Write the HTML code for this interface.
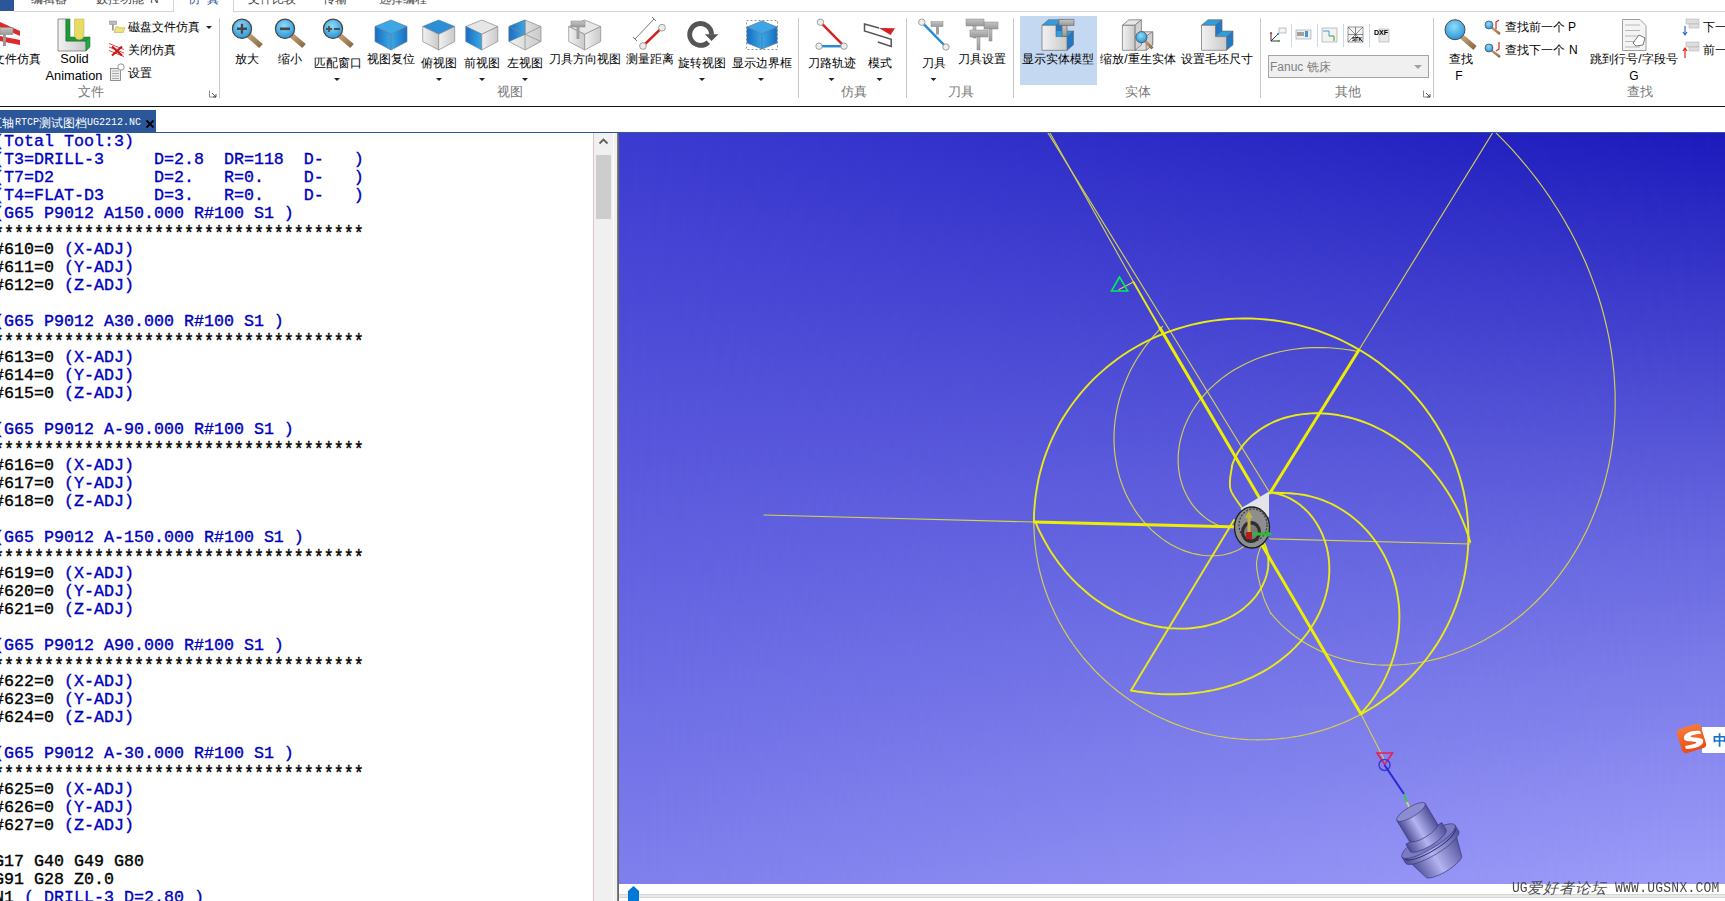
<!DOCTYPE html>
<html><head><meta charset="utf-8">
<style>
*{margin:0;padding:0;box-sizing:border-box}
html,body{width:1725px;height:901px;overflow:hidden;background:#fff;position:relative;font-family:"Liberation Sans",sans-serif;color:#000}
.a{position:absolute}
.t12{font-size:12px;line-height:14px;white-space:nowrap}
#code{position:absolute;left:-6px;top:133px;font-family:"Liberation Mono",monospace;font-weight:normal;-webkit-text-stroke:0.35px currentColor;font-size:16.667px;line-height:18px;white-space:pre;color:#000}
#code .c{color:#0000c0}
#code .st{display:inline-block;transform:translateY(3px) scale(1.0,1.2);transform-origin:0 50%}
#vp{position:absolute;left:619px;top:133px;width:1106px;height:751px;background:linear-gradient(to bottom,rgb(60,59,209),rgb(127,127,237));overflow:hidden}
#vp .r{position:absolute;left:0;top:0;width:100%;height:100%;background:linear-gradient(to bottom,rgb(28,26,187) 0%,rgb(96,96,220) 48%,rgb(157,157,249) 100%);-webkit-mask-image:linear-gradient(to right,transparent,#000);mask-image:linear-gradient(to right,transparent,#000)}
</style></head><body>

<!-- top tab row -->
<div class="a" style="left:0;top:0;width:14px;height:11px;background:#2b579a"></div>
<div class="a" style="left:14px;top:11px;width:160px;height:1px;background:#d5d5d5"></div>
<div class="a" style="left:233px;top:11px;width:1492px;height:1px;background:#d5d5d5"></div>
<div class="a" style="left:173px;top:0;width:1px;height:12px;background:#d5d5d5"></div>
<div class="a" style="left:233px;top:0;width:1px;height:12px;background:#d5d5d5"></div>

<!-- tab labels -->
<div class="a t12" style="left:31px;top:-8px;color:#444">编辑器</div>
<div class="a t12" style="left:96px;top:-8px;color:#444">数控功能</div>
<div class="a t12" style="left:150px;top:-8px;color:#444">N</div>
<div class="a t12" style="left:188px;top:-8px;color:#2b579a">仿&nbsp;&nbsp;真</div>
<div class="a t12" style="left:248px;top:-8px;color:#444">文件比较</div>
<div class="a t12" style="left:323px;top:-8px;color:#444">传输</div>
<div class="a t12" style="left:379px;top:-8px;color:#444">选择编程</div>

<!-- ribbon icons -->
<svg class="a" style="left:0;top:0" width="1725" height="106" viewBox="0 0 1725 106">
<defs>
<linearGradient id="gB" x1="0" y1="0" x2="1" y2="0"><stop offset="0" stop-color="#1a6cbf"/><stop offset="1" stop-color="#3aa8e6"/></linearGradient>
<linearGradient id="gB2" x1="0" y1="0" x2="1" y2="0"><stop offset="0" stop-color="#3aa8e6"/><stop offset="1" stop-color="#1a6cbf"/></linearGradient>
<linearGradient id="gG" x1="0" y1="0" x2="1" y2="0"><stop offset="0" stop-color="#f2f2f2"/><stop offset="1" stop-color="#c9c9c9"/></linearGradient>
<linearGradient id="gG2" x1="0" y1="0" x2="0" y2="1"><stop offset="0" stop-color="#c4c4c4"/><stop offset="1" stop-color="#9a9a9a"/></linearGradient>
<radialGradient id="gL" cx="0.45" cy="0.35" r="0.65"><stop offset="0" stop-color="#8fdcfa"/><stop offset="1" stop-color="#2a96d6"/></radialGradient>
<linearGradient id="gH" x1="0" y1="0" x2="1" y2="1"><stop offset="0" stop-color="#c9a77c"/><stop offset="1" stop-color="#8c6a45"/></linearGradient>
</defs>
<g stroke="#c8c8c8" stroke-width="1">
<line x1="219.5" y1="18" x2="219.5" y2="98"/>
<line x1="798.5" y1="18" x2="798.5" y2="98"/>
<line x1="906.5" y1="18" x2="906.5" y2="98"/>
<line x1="1013.5" y1="18" x2="1013.5" y2="98"/>
<line x1="1260.5" y1="18" x2="1260.5" y2="98"/>
<line x1="1433.5" y1="18" x2="1433.5" y2="98"/>
</g>
<!-- file sim icon (cut) -->
<g>
<polygon points="0,22 20,31 20,36 0,27" fill="#e02a2a"/>
<polygon points="0,36 20,40 20,45 0,41" fill="#e02a2a"/>
<rect x="0" y="27.5" width="13" height="7" fill="url(#gG2)" stroke="#888" stroke-width="0.6"/>
<rect x="3" y="34" width="3" height="12" fill="#9a9a9a"/>
</g>
<!-- solid animation -->
<g>
<polygon points="58,19 66,19 66,41 86,41 86,51 58,51" fill="url(#gG)" stroke="#777" stroke-width="0.8"/>
<polygon points="66,19 70,19 70,37 90,37 86,41 66,41" fill="#1f9a3a" stroke="#136b25" stroke-width="0.5"/>
<polygon points="86,41 90,37 90,47 86,51" fill="#2aa54a" stroke="#136b25" stroke-width="0.5"/>
<path d="M74.5,19 H84 V35 A4.75,4.75 0 0 1 74.5,35 Z" fill="#e6dc64" stroke="#b8ac40" stroke-width="0.5"/>
</g>
<!-- small file icons -->
<g>
<rect x="109.5" y="21" width="7" height="3.5" fill="#bbb" stroke="#888" stroke-width="0.5"/>
<rect x="112" y="24.5" width="1.8" height="6" fill="#9a9a9a"/>
<polygon points="114.2,32.5 115.8,26.8 118.5,26.8 119.5,27.8 125,27.8 123.2,32.5" fill="#efe27a" stroke="#b8a844" stroke-width="0.6"/>
<path d="M109,43.5 L124,49.5 M109,47 L124,53 M109,50.5 L124,56.5" stroke="#e04848" stroke-width="1" fill="none"/>
<polygon points="114,49 117,47 120,50 117,53" fill="#bfe8ea"/>
<path d="M112,46.5 L122,55.5 M122,46.5 L112,55.5" stroke="#c81414" stroke-width="2"/>
<rect x="110.5" y="68.5" width="10" height="12" fill="#eee" stroke="#777" stroke-width="0.8"/>
<path d="M112,71 h7 M112,73.5 h7 M112,76 h7 M112,78.5 h7" stroke="#999" stroke-width="0.8"/>
<circle cx="121" cy="67" r="3.2" fill="#fff" stroke="#777" stroke-width="0.8"/>
<polygon points="206,26 212,26 209,29" fill="#222"/>
<path d="M209.5,90.5 v6.5 h6.5" stroke="#888" fill="none"/><path d="M212,93 l4,4 M216,94 v3 h-3" stroke="#444" fill="none" stroke-width="0.9"/>
</g>
<!-- magnifiers -->
<g id="mag">
<line x1="247" y1="34" x2="261" y2="46" stroke="url(#gH)" stroke-width="5.5"/>
<circle cx="242" cy="28.8" r="9.6" fill="url(#gL)" stroke="#4a4444" stroke-width="1.2"/>
<path d="M237,28.8 h10 M242,23.8 v10" stroke="#4a4444" stroke-width="2.4"/>
</g>
<g>
<line x1="290" y1="34" x2="304" y2="46" stroke="url(#gH)" stroke-width="5.5"/>
<circle cx="285" cy="28.8" r="9.6" fill="url(#gL)" stroke="#4a4444" stroke-width="1.2"/>
<path d="M280,28.8 h10" stroke="#4a4444" stroke-width="2.6"/>
</g>
<g>
<line x1="338" y1="34" x2="352" y2="46" stroke="url(#gH)" stroke-width="5.5"/>
<circle cx="333" cy="28.8" r="9.6" fill="url(#gL)" stroke="#4a4444" stroke-width="1.2"/>
<path d="M326,29 h6 M329,26 v6 M334,29 h6" stroke="#4f4f4f" stroke-width="1.8"/>
</g>
<polygon points="334,78 340,78 337,81" fill="#222"/>
<!-- cubes -->
<g stroke="#5a7ea8" stroke-width="0.7" stroke-linejoin="round">
<polygon points="391,20 407,26.5 391,34.3 375,26.5" fill="#3ea6e4"/>
<polygon points="375,26.5 391,34.3 391,50 375,41.5" fill="url(#gB)"/>
<polygon points="391,34.3 407,26.5 407,41.5 391,50" fill="url(#gB2)"/>
</g>
<g stroke="#8a8a8a" stroke-width="0.7" stroke-linejoin="round">
<polygon points="438.7,20 454.7,26.5 438.7,34.3 422.7,26.5" fill="#2b8fd6" stroke="#4a7eb0"/>
<polygon points="422.7,26.5 438.7,34.3 438.7,50 422.7,41.5" fill="url(#gG)"/>
<polygon points="438.7,34.3 454.7,26.5 454.7,41.5 438.7,50" fill="url(#gG)"/>
<polygon points="481.8,20 497.8,26.5 481.8,34.3 465.8,26.5" fill="#e6e6e6"/>
<polygon points="465.8,26.5 481.8,34.3 481.8,50 465.8,41.5" fill="url(#gB)" stroke="#4a7eb0"/>
<polygon points="481.8,34.3 497.8,26.5 497.8,41.5 481.8,50" fill="url(#gG)"/>
<polygon points="525,20 541,26.5 541,41.5 525,50 509,41.5 509,26.5" fill="url(#gG)"/>
<polygon points="525,20 525,34.3 509,41.5 509,26.5" fill="url(#gB)" stroke="#4a7eb0"/>
<path d="M525,34.3 L541,26.5 M525,34.3 L541,41.5 M525,34.3 V50 M525,34.3 L509,26.5 M525,20 V34.3" fill="none"/>
<polygon points="584.7,20 600.7,26.5 584.7,34.3 568.7,26.5" fill="#e8e8e8"/>
<polygon points="568.7,26.5 584.7,34.3 584.7,50 568.7,41.5" fill="url(#gG)"/>
<polygon points="584.7,34.3 600.7,26.5 600.7,41.5 584.7,50" fill="url(#gG)"/>
</g>
<g><rect x="571" y="21" width="14" height="6" fill="url(#gG2)" stroke="#888" stroke-width="0.5"/><rect x="576.5" y="27" width="3" height="12" fill="#a0a0a0"/></g>
<polygon points="436,78 442,78 439,81" fill="#222"/>
<polygon points="479,78 485,78 482,81" fill="#222"/>
<polygon points="522,78 528,78 525,81" fill="#222"/>
<!-- measure -->
<g>
<path d="M635,39 L654,19 M633,37 l4,4 M652,17 l4,4" stroke="#555" stroke-width="0.8" fill="none"/>
<line x1="643" y1="46" x2="662" y2="27.7" stroke="#d62020" stroke-width="2.5"/>
<circle cx="643" cy="46" r="3.4" fill="#ececec" stroke="#8a8a8a" stroke-width="0.8"/>
<circle cx="662" cy="27.7" r="3.4" fill="#ececec" stroke="#8a8a8a" stroke-width="0.8"/>
</g>
<!-- rotate -->
<g>
<path d="M708.3,42.2 A10.9,10.9 0 1 1 711.5,34.6" stroke="#555" stroke-width="4.9" fill="none"/>
<polygon points="704.9,34.3 718.4,34.3 711.5,41" fill="#555"/>
</g>
<polygon points="699,78 705,78 702,81" fill="#222"/>
<!-- bbox cube -->
<rect x="746.5" y="20.5" width="31" height="29" fill="none" stroke="#777" stroke-width="0.8" stroke-dasharray="2,2"/>
<g stroke="#4a7eb0" stroke-width="0.7" stroke-linejoin="round">
<polygon points="762,21 777,27 762,34 747,27" fill="#3ea6e4"/>
<polygon points="747,27 762,34 762,49 747,43" fill="url(#gB)"/>
<polygon points="762,34 777,27 777,43 762,49" fill="url(#gB2)"/>
</g>
<polygon points="758,78 764,78 761,81" fill="#222"/>
<!-- toolpath -->
<g>
<line x1="820.4" y1="22.2" x2="844" y2="46.2" stroke="#d42424" stroke-width="2.5"/>
<line x1="819" y1="46.2" x2="844" y2="46.2" stroke="#2a8ad0" stroke-width="2.5"/>
<circle cx="820.4" cy="22.2" r="3.2" fill="#eee" stroke="#8a8a8a" stroke-width="0.8"/>
<circle cx="844" cy="46.2" r="3.2" fill="#eee" stroke="#8a8a8a" stroke-width="0.8"/>
<circle cx="819" cy="46.2" r="3.2" fill="#eee" stroke="#8a8a8a" stroke-width="0.8"/>
</g>
<polygon points="828.5,78 834.5,78 831.5,81" fill="#222"/>
<!-- mode -->
<g>
<polyline points="879,28 864.5,24 864.5,31 891.2,39.4 891.2,46.4 877.8,42" stroke="#555" stroke-width="1.5" fill="none"/>
<polygon points="879,28 895,28.3 890.6,35" fill="#d62020"/>
</g>
<polygon points="876.5,78 882.5,78 879.5,81" fill="#222"/>
<!-- tool -->
<g>
<rect x="931" y="21.6" width="12" height="5" fill="url(#gG2)" stroke="#888" stroke-width="0.5"/>
<rect x="936" y="26.6" width="3" height="8" fill="#a0a0a0"/>
<line x1="921.8" y1="22.2" x2="946" y2="47" stroke="#2a8ad0" stroke-width="2.5"/>
<circle cx="921.8" cy="22.2" r="3.2" fill="#eee" stroke="#8a8a8a" stroke-width="0.8"/>
<circle cx="946" cy="47" r="3.2" fill="#eee" stroke="#8a8a8a" stroke-width="0.8"/>
</g>
<polygon points="930.5,78 936.5,78 933.5,81" fill="#222"/>
<!-- tool setting -->
<g fill="url(#gG2)" stroke="#888" stroke-width="0.5">
<rect x="984" y="22" width="14" height="7"/><rect x="989" y="29" width="3" height="12"/>
<rect x="966" y="19" width="18" height="7"/><rect x="973" y="26" width="3" height="12"/>
<rect x="970" y="30" width="18" height="7"/><rect x="977" y="37" width="3" height="13"/>
</g>
<!-- highlight -->
<rect x="1020" y="16" width="77" height="69" fill="#c5d8f2"/>
<!-- solid icons -->
<g stroke="#6a6a6a" stroke-width="0.7" stroke-linejoin="round"><polygon points="1042.0,25.3 1048.5,19.8 1062.5,19.8 1056.0,25.3" fill="#2f9ee0"/><polygon points="1056.0,25.3 1062.5,19.8 1062.5,31.1 1056.0,36.6" fill="#1f78c8"/><polygon points="1056.0,36.6 1062.5,31.1 1073.5,31.1 1067.0,36.6" fill="#2f9ee0"/><polygon points="1067.0,36.6 1073.5,31.1 1073.5,44.8 1067.0,50.3" fill="#1f78c8"/><polygon points="1042.0,25.3 1056.0,25.3 1056.0,36.6 1067.0,36.6 1067.0,50.3 1042.0,50.3" fill="url(#gG)"/><rect x="1056.5" y="31" width="5" height="6" fill="#2f9ee0" stroke="none"/><rect x="1062.0" y="25.3" width="5" height="11" fill="url(#gG2)"/><rect x="1059.0" y="19.4" width="15" height="6" fill="url(#gG2)"/></g>
<g stroke="#6a6a6a" stroke-width="0.7" stroke-linejoin="round"><polygon points="1135,36 1141.5,31.8 1152.7,31.8 1152.7,45 1146.2,50.3 1135,50.3" fill="#e0e0e0"/><polygon points="1146.2,36 1152.7,31.8 1152.7,45 1146.2,50.3" fill="#cfcfcf"/><polygon points="1122.4,25.3 1128.9,19.8 1141.4,19.8 1134.9,25.3" fill="#e6e6e6"/><polygon points="1134.9,25.3 1141.4,19.8 1141.4,45 1134.9,50.3" fill="#d2d2d2"/><rect x="1122.4" y="25.3" width="12.5" height="25" fill="url(#gG)"/><line x1="1144" y1="40" x2="1152.5" y2="48.5" stroke="url(#gH)" stroke-width="3"/><circle cx="1141.4" cy="37.2" r="5.6" fill="url(#gL)" stroke="#4a4a4a" stroke-width="0.8"/></g>
<g stroke="#6a6a6a" stroke-width="0.7" stroke-linejoin="round"><polygon points="1201.5,25.3 1208.0,19.8 1222.0,19.8 1215.5,25.3" fill="#2f9ee0"/><polygon points="1215.5,25.3 1222.0,19.8 1222.0,31.1 1215.5,36.6" fill="#1f78c8"/><polygon points="1215.5,36.6 1222.0,31.1 1233.0,31.1 1226.5,36.6" fill="#2f9ee0"/><polygon points="1226.5,36.6 1233.0,31.1 1233.0,44.8 1226.5,50.3" fill="#1f78c8"/><polygon points="1201.5,25.3 1215.5,25.3 1215.5,36.6 1226.5,36.6 1226.5,50.3 1201.5,50.3" fill="url(#gG)"/></g>
<!-- other small icons -->
<g stroke="#c9d9ec" stroke-width="1"><line x1="1291.5" y1="24" x2="1291.5" y2="47"/><line x1="1317.5" y1="24" x2="1317.5" y2="47"/><line x1="1343.5" y1="24" x2="1343.5" y2="47"/><line x1="1369.5" y1="24" x2="1369.5" y2="47"/></g>
<g>
<path d="M1271,41 L1278,34 M1271,41 H1279 M1271,41 V33" stroke="#333" stroke-width="1" fill="none"/>
<circle cx="1271" cy="33" r="1" fill="#d22"/><circle cx="1278" cy="34" r="1" fill="#27c"/><circle cx="1279" cy="41" r="1" fill="#2a2"/>
<rect x="1279" y="28" width="7" height="5" fill="#f4f4f4" stroke="#999" stroke-width="0.6"/>
<rect x="1296" y="30" width="15" height="9" fill="#eee" stroke="#999" stroke-width="0.6"/><rect x="1305" y="31" width="3" height="6" fill="#3a9ad8"/><path d="M1297,33 h7 M1297,35 h7" stroke="#555" stroke-width="1"/>
<rect x="1322" y="28" width="15" height="14" fill="#f2f2f2" stroke="#999" stroke-width="0.6"/><path d="M1323,31 h6 v5 h5 v5" stroke="#3aa0e0" stroke-width="1" fill="none"/><path d="M1329,36 h5 v5" stroke="#8ac43a" stroke-width="1" fill="none"/>
<rect x="1348" y="27" width="15" height="15" fill="#f4f4f4" stroke="#555" stroke-width="0.6"/><path d="M1348,27 l15,15 M1363,27 l-15,15 M1355.5,27 v15 M1348,34.5 h15" stroke="#444" stroke-width="0.6"/><text x="1352" y="41" font-size="5" font-weight="bold" font-family="Liberation Sans">STK</text>
<rect x="1379" y="29" width="10" height="13" fill="#e8e8e8" stroke="#aaa" stroke-width="0.6"/><text x="1374" y="35" font-size="7" font-weight="bold" font-family="Liberation Sans">DXF</text>
</g>
<rect x="1268.5" y="55.5" width="160" height="22" fill="#f0f0f0" stroke="#a5a5a5"/>
<polygon points="1414,65 1422,65 1418,69" fill="#a0a0a0"/>
<path d="M1423.5,90.5 v6.5 h6.5" stroke="#888" fill="none"/><path d="M1426,93 l4,4 M1430,94 v3 h-3" stroke="#444" fill="none" stroke-width="0.9"/>
<!-- find -->
<g>
<line x1="1461" y1="36" x2="1475" y2="48" stroke="url(#gH)" stroke-width="5"/>
<circle cx="1455" cy="29.7" r="10" fill="url(#gL)" stroke="#4a4a4a" stroke-width="1"/>
</g>
<g>
<line x1="1491" y1="27" x2="1500" y2="34" stroke="url(#gH)" stroke-width="2.5"/>
<circle cx="1489" cy="25" r="4" fill="url(#gL)" stroke="#4a4a4a" stroke-width="0.7"/>
<path d="M1496,29 v-7 l3,-2" stroke="#d22" stroke-width="1.2" fill="none"/>
<line x1="1491" y1="50" x2="1500" y2="57" stroke="url(#gH)" stroke-width="2.5"/>
<circle cx="1489" cy="48" r="4" fill="url(#gL)" stroke="#4a4a4a" stroke-width="0.7"/>
<path d="M1499,42 v7 l-3,2" stroke="#d22" stroke-width="1.2" fill="none"/>
</g>
<g>
<path d="M1622.5,19.5 H1640 L1646,25.5 V50.5 H1622.5 Z" fill="#f4f4f4" stroke="#888" stroke-width="0.8"/>
<path d="M1625,25 h15 M1625,30.5 h15 M1625,36 h15 M1625,41.5 h15 M1625,47 h15" stroke="#aaa" stroke-width="0.8"/>
<path d="M1633,43 l6,-8 l6,3 l-2,7 l-7,1 z" fill="#fff" stroke="#555" stroke-width="0.8"/>
</g>
<g>
<rect x="1686" y="19" width="13" height="5" fill="#ddd" stroke="#aaa" stroke-width="0.5"/><rect x="1689" y="24" width="10" height="4" fill="#ddd" stroke="#aaa" stroke-width="0.5"/>
<path d="M1685,26 v8 M1683,32 l2,3 l2,-3" stroke="#2a70c8" stroke-width="1.2" fill="none"/>
<rect x="1686" y="42" width="13" height="5" fill="#ddd" stroke="#aaa" stroke-width="0.5"/><rect x="1689" y="47" width="10" height="4" fill="#ddd" stroke="#aaa" stroke-width="0.5"/>
<path d="M1685,58 v-9 M1683,51 l2,-3 l2,3" stroke="#d22" stroke-width="1.2" fill="none"/>
</g>
</svg>

<!-- ribbon labels -->
<div class="a t12" style="left:-7px;top:52px;width:42px;text-align:right">文件仿真</div>
<div class="a t12" style="left:24.5px;top:52px;width:100px;text-align:center;font-size:12.8px">Solid</div>
<div class="a t12" style="left:24px;top:69px;width:100px;text-align:center;font-size:12.8px">Animation</div>
<div class="a t12" style="left:128px;top:20px">磁盘文件仿真</div>
<div class="a t12" style="left:128px;top:43px">关闭仿真</div>
<div class="a t12" style="left:128px;top:66px">设置</div>
<div class="a t12" style="left:41px;top:84px;width:100px;text-align:center;color:#777;font-size:13px;line-height:16px">文件</div>

<div class="a t12" style="left:197px;top:52px;width:100px;text-align:center">放大</div>
<div class="a t12" style="left:240px;top:52px;width:100px;text-align:center">缩小</div>
<div class="a t12" style="left:288px;top:56px;width:100px;text-align:center">匹配窗口</div>
<div class="a t12" style="left:341px;top:52px;width:100px;text-align:center">视图复位</div>
<div class="a t12" style="left:389px;top:56px;width:100px;text-align:center">俯视图</div>
<div class="a t12" style="left:432px;top:56px;width:100px;text-align:center">前视图</div>
<div class="a t12" style="left:475px;top:56px;width:100px;text-align:center">左视图</div>
<div class="a t12" style="left:535px;top:52px;width:100px;text-align:center">刀具方向视图</div>
<div class="a t12" style="left:600px;top:52px;width:100px;text-align:center">测量距离</div>
<div class="a t12" style="left:652px;top:56px;width:100px;text-align:center">旋转视图</div>
<div class="a t12" style="left:712px;top:56px;width:100px;text-align:center">显示边界框</div>
<div class="a t12" style="left:460px;top:84px;width:100px;text-align:center;color:#777;font-size:13px;line-height:16px">视图</div>

<div class="a t12" style="left:782px;top:56px;width:100px;text-align:center">刀路轨迹</div>
<div class="a t12" style="left:830px;top:56px;width:100px;text-align:center">模式</div>
<div class="a t12" style="left:884px;top:56px;width:100px;text-align:center">刀具</div>
<div class="a t12" style="left:932px;top:52px;width:100px;text-align:center">刀具设置</div>
<div class="a t12" style="left:804px;top:84px;width:100px;text-align:center;color:#777;font-size:13px;line-height:16px">仿真</div>
<div class="a t12" style="left:911px;top:84px;width:100px;text-align:center;color:#777;font-size:13px;line-height:16px">刀具</div>

<div class="a t12" style="left:1008px;top:52px;width:100px;text-align:center">显示实体模型</div>
<div class="a t12" style="left:1088px;top:52px;width:100px;text-align:center">缩放/重生实体</div>
<div class="a t12" style="left:1167px;top:52px;width:100px;text-align:center">设置毛坯尺寸</div>
<div class="a t12" style="left:1088px;top:84px;width:100px;text-align:center;color:#777;font-size:13px;line-height:16px">实体</div>

<div class="a t12" style="left:1270px;top:60px;color:#808080">Fanuc</div>
<div class="a t12" style="left:1307px;top:60px;color:#808080">铣床</div>
<div class="a t12" style="left:1298px;top:84px;width:100px;text-align:center;color:#777;font-size:13px;line-height:16px">其他</div>

<div class="a t12" style="left:1411px;top:52px;width:100px;text-align:center">查找</div>
<div class="a t12" style="left:1409px;top:69px;width:100px;text-align:center">F</div>
<div class="a t12" style="left:1505px;top:20px">查找前一个</div>
<div class="a t12" style="left:1568px;top:20px">P</div>
<div class="a t12" style="left:1505px;top:43px">查找下一个</div>
<div class="a t12" style="left:1569px;top:43px">N</div>
<div class="a t12" style="left:1584px;top:52px;width:100px;text-align:center">跳到行号/字段号</div>
<div class="a t12" style="left:1584px;top:69px;width:100px;text-align:center">G</div>
<div class="a t12" style="left:1590px;top:84px;width:100px;text-align:center;color:#777;font-size:13px;line-height:16px">查找</div>
<div class="a t12" style="left:1703px;top:20px">下一</div>
<div class="a t12" style="left:1703px;top:43px">前一</div>

<!-- ribbon separator line -->
<div class="a" style="left:0;top:106px;width:1725px;height:1px;background:#111"></div>

<!-- doc tab -->
<div class="a" style="left:0;top:110px;width:156px;height:22px;background:#2b579a"></div>
<div class="a" style="left:0;top:132px;width:1725px;height:1px;background:#2b579a"></div>
<div class="a" style="left:-10px;top:116px;font-size:12px;line-height:14px;color:#fff;white-space:nowrap">五轴</div>
<div class="a" style="left:15px;top:116px;font-family:'Liberation Mono',monospace;font-size:10px;line-height:14px;color:#fff;white-space:nowrap">RTCP</div>
<div class="a" style="left:39px;top:116px;font-size:12px;line-height:14px;color:#fff;white-space:nowrap">测试图档</div>
<div class="a" style="left:87px;top:116px;font-family:'Liberation Mono',monospace;font-size:10px;line-height:14px;color:#fff;white-space:nowrap">UG2212.NC</div>
<svg class="a" style="left:145px;top:119px" width="10" height="10"><path d="M1.5,1.5 L8.5,8.5 M8.5,1.5 L1.5,8.5" stroke="#000" stroke-width="1.8"/></svg>

<!-- code -->
<div id="code"><span class="c">(Total Tool:3)
(T3=DRILL-3     D=2.8  DR=118  D-   )
(T7=D2          D=2.   R=0.    D-   )
(T4=FLAT-D3     D=3.   R=0.    D-   )
(G65 P9012 A150.000 R#100 S1 )</span>
<span class="st">*************************************</span>
#610=0 <span class="c">(X-ADJ)</span>
#611=0 <span class="c">(Y-ADJ)</span>
#612=0 <span class="c">(Z-ADJ)</span>

<span class="c">(G65 P9012 A30.000 R#100 S1 )</span>
<span class="st">*************************************</span>
#613=0 <span class="c">(X-ADJ)</span>
#614=0 <span class="c">(Y-ADJ)</span>
#615=0 <span class="c">(Z-ADJ)</span>

<span class="c">(G65 P9012 A-90.000 R#100 S1 )</span>
<span class="st">*************************************</span>
#616=0 <span class="c">(X-ADJ)</span>
#617=0 <span class="c">(Y-ADJ)</span>
#618=0 <span class="c">(Z-ADJ)</span>

<span class="c">(G65 P9012 A-150.000 R#100 S1 )</span>
<span class="st">*************************************</span>
#619=0 <span class="c">(X-ADJ)</span>
#620=0 <span class="c">(Y-ADJ)</span>
#621=0 <span class="c">(Z-ADJ)</span>

<span class="c">(G65 P9012 A90.000 R#100 S1 )</span>
<span class="st">*************************************</span>
#622=0 <span class="c">(X-ADJ)</span>
#623=0 <span class="c">(Y-ADJ)</span>
#624=0 <span class="c">(Z-ADJ)</span>

<span class="c">(G65 P9012 A-30.000 R#100 S1 )</span>
<span class="st">*************************************</span>
#625=0 <span class="c">(X-ADJ)</span>
#626=0 <span class="c">(Y-ADJ)</span>
#627=0 <span class="c">(Z-ADJ)</span>

G17 G40 G49 G80
G91 G28 Z0.0
N1 <span class="c">( DRILL-3 D=2.80 )</span></div>

<!-- scrollbar -->
<div class="a" style="left:593px;top:133px;width:1px;height:768px;background:#dcc4c4"></div>
<div class="a" style="left:594px;top:133px;width:19px;height:768px;background:#f0f0f0"></div>
<div class="a" style="left:596px;top:155px;width:15px;height:64px;background:#cdcdcd"></div>
<svg class="a" style="left:597px;top:136px" width="13" height="10"><path d="M2.5,7.5 L6.5,3.5 L10.5,7.5" stroke="#606060" stroke-width="1.8" fill="none"/></svg>
<div class="a" style="left:614px;top:133px;width:4px;height:768px;background:#f0f0f0"></div>
<div class="a" style="left:617px;top:133px;width:2px;height:768px;background:linear-gradient(to right,#8a8a8a,#5a5a5a)"></div>

<!-- viewport -->
<div id="vp"><div class="r"></div></div>
<!-- VP-SVG-START -->
<svg class="a" style="left:619px;top:133px" width="1106" height="751" viewBox="0 0 1106 751">
<g fill="none" stroke-linecap="round" stroke-linejoin="round">
<path d="M414.9,389.0 L414.9,392.7 L415.0,396.4 L415.2,400.1 L415.4,403.8 L415.7,407.4 L416.1,411.1 L416.5,414.8 L417.0,418.5 L417.5,422.2 L418.2,425.8 L418.8,429.5 L419.6,433.1 L420.4,436.7 L421.3,440.3 L422.3,444.0 L423.3,447.5 L424.3,451.1 L425.5,454.7 L426.7,458.2 L428.0,461.7 L429.3,465.2 L430.7,468.7 L432.1,472.2 L433.7,475.6 L435.2,479.0 L436.9,482.4 L438.6,485.7 L440.3,489.1 L442.2,492.4 L444.0,495.6 L446.0,498.9 L448.0,502.1 L450.0,505.3 L452.1,508.4 L454.3,511.5 L456.5,514.6 L458.8,517.6 L461.1,520.6 L463.4,523.6 L465.9,526.5 L468.3,529.4 L470.9,532.2 L473.4,535.0 L476.1,537.8 L478.7,540.5 L481.5,543.1 L484.2,545.8 L487.0,548.3 L489.9,550.9 L492.8,553.4 L495.7,555.8 L498.7,558.2 L501.8,560.5 L504.8,562.8 L507.9,565.0 L511.1,567.2 L514.2,569.3 L517.5,571.4 L520.7,573.4 L524.0,575.4 L527.3,577.3 L530.7,579.2 L534.0,581.0 L537.5,582.7 L540.9,584.4 L544.4,586.0 L547.9,587.6 L551.4,589.1 L554.9,590.6 L558.5,591.9 L562.1,593.3 L565.7,594.5 L569.4,595.8 L573.0,596.9 L576.7,598.0 L580.4,599.0 L584.1,600.0 L587.8,600.9 L591.5,601.7 L595.3,602.5 L599.0,603.2 L602.8,603.8 L606.6,604.4 L610.4,605.0 L614.2,605.4 L618.0,605.8 L621.8,606.1 L625.6,606.4 L629.4,606.6 L633.2,606.7 L637.0,606.8 L640.8,606.8 L644.6,606.7 L648.4,606.6 L652.2,606.4 L656.0,606.2 L659.8,605.8 L663.5,605.4 L667.3,605.0 L671.0,604.5 L674.8,603.9 L678.5,603.3 L682.2,602.6 L685.9,601.8 L689.6,601.0 L693.3,600.1 L696.9,599.1 L700.5,598.1 L704.1,597.0 L707.7,595.9 L711.3,594.7 L714.8,593.4 L718.3,592.1 L721.8,590.7 L725.3,589.2 L728.7,587.7 L732.1,586.2 L735.4,584.6 L738.8,582.9 L742.1,581.1" stroke="#d4d04c" stroke-width="1.15"/>
<path d="M739.0,218.5 L733.1,217.4 L727.3,216.5 L721.5,215.7 L715.7,215.2 L710.0,214.8 L704.3,214.6 L698.7,214.5 L693.1,214.6 L687.6,214.9 L682.1,215.4 L676.7,216.0 L671.4,216.8 L666.1,217.7 L661.0,218.8 L655.9,220.0 L650.9,221.4 L646.0,222.9 L641.2,224.5 L636.6,226.3 L632.0,228.2 L627.6,230.3 L623.2,232.4 L619.0,234.7 L614.9,237.1 L611.0,239.6 L607.1,242.2 L603.4,244.9 L599.9,247.7 L596.5,250.6 L593.2,253.6 L590.0,256.6 L587.0,259.8 L584.2,263.0 L581.5,266.2 L579.0,269.5 L576.6,272.9 L574.3,276.3 L572.2,279.8 L570.3,283.3 L568.5,286.8 L566.9,290.4 L565.4,294.0 L564.1,297.6 L563.0,301.2 L562.0,304.8 L561.1,308.4 L560.4,312.0 L559.9,315.6 L559.5,319.1 L559.2,322.7 L559.1,326.2 L559.2,329.7 L559.4,333.2 L559.7,336.6 L560.2,339.9 L560.8,343.2 L561.6,346.5 L562.5,349.7 L563.5,352.8 L564.6,355.8 L565.9,358.8 L567.3,361.6 L568.8,364.4 L570.4,367.1 L572.1,369.8 L573.9,372.3 L575.8,374.7 L577.8,377.0 L580.0,379.2 L582.2,381.2 L584.4,383.2 L586.8,385.1 L589.2,386.8 L591.7,388.4 L594.3,389.8 L596.9,391.2 L599.5,392.4 L602.2,393.4" stroke="#d4d04c" stroke-width="1.15"/>
<path d="M543.5,193.4 L539.3,197.8 L535.2,202.4 L531.3,207.0 L527.6,211.7 L524.1,216.5 L520.8,221.4 L517.7,226.3 L514.8,231.2 L512.1,236.3 L509.6,241.3 L507.4,246.4 L505.3,251.6 L503.4,256.7 L501.7,261.9 L500.2,267.0 L498.9,272.2 L497.8,277.3 L496.9,282.4 L496.1,287.5 L495.6,292.6 L495.2,297.6 L495.0,302.6 L495.0,307.5 L495.2,312.4 L495.5,317.2 L496.0,322.0 L496.7,326.7 L497.5,331.3 L498.4,335.8 L499.5,340.2 L500.7,344.6 L502.1,348.8 L503.6,352.9 L505.2,357.0 L506.9,360.9 L508.8,364.7 L510.7,368.4 L512.8,372.0 L514.9,375.5 L517.1,378.9 L519.4,382.1 L521.8,385.2 L524.2,388.2 L526.7,391.0 L529.3,393.7 L531.9,396.3 L534.6,398.8 L537.3,401.1 L540.0,403.3 L542.7,405.4 L545.5,407.4 L548.3,409.2 L551.1,410.9 L553.9,412.5 L556.7,413.9 L559.5,415.3 L562.2,416.5 L565.0,417.6 L567.7,418.6 L570.4,419.4 L573.1,420.2 L575.8,420.9 L578.3,421.4 L580.9,421.9 L583.4,422.3 L585.9,422.5 L588.3,422.7 L590.6,422.8 L592.9,422.9 L595.1,422.8 L597.3,422.7 L599.3,422.5 L601.4,422.3 L603.3,422.0 L605.2,421.7 L607.0,421.3 L608.7,420.8 L610.4,420.4 L612.0,419.9 L613.5,419.3 L614.9,418.8 L616.3,418.2 L617.5,417.7 L618.8,417.1 L619.9,416.5 L621.0,415.9 L622.0,415.3 L622.9,414.7 L623.8,414.2 L624.6,413.6 L625.4,413.1 L626.1,412.6 L626.8,412.1 L627.4,411.7 L628.0,411.3 L628.5,410.9 L629.0,410.6 L629.4,410.4 L629.9,410.1 L630.3,410.0 L630.7,409.9 L631.1,409.8 L631.4,409.8 L631.8,409.8 L632.2,410.0 L632.6,410.1 L632.9,410.4 L633.4,410.6 L633.8,411.0 L634.2,411.4 L634.7,411.9 L635.3,412.4" stroke="#d4d04c" stroke-width="1.15"/>
<path d="M874.9,-2.3 L884.0,6.9 L892.8,16.2 L901.3,25.8 L909.4,35.5 L917.2,45.4 L924.7,55.5 L931.7,65.7 L938.4,76.0 L944.8,86.5 L950.8,97.1 L956.4,107.7 L961.6,118.5 L966.5,129.3 L971.0,140.2 L975.1,151.1 L978.9,162.0 L982.3,173.0 L985.3,184.0 L987.9,195.0 L990.2,205.9 L992.1,216.9 L993.6,227.7 L994.8,238.6 L995.6,249.4 L996.1,260.1 L996.2,270.7 L996.0,281.2 L995.4,291.6 L994.5,301.9 L993.2,312.1 L991.7,322.1 L989.8,332.0 L987.6,341.7 L985.1,351.3 L982.3,360.7 L979.2,369.8 L975.8,378.8 L972.2,387.6 L968.3,396.2 L964.1,404.6 L959.7,412.7 L955.0,420.6 L950.2,428.3 L945.1,435.7 L939.8,442.9 L934.3,449.8 L928.6,456.5 L922.7,462.9 L916.7,469.0 L910.5,474.9 L904.2,480.5 L897.7,485.8 L891.1,490.8 L884.4,495.5 L877.6,500.0 L870.7,504.1 L863.8,508.0 L856.7,511.6 L849.6,514.8 L842.5,517.8 L835.3,520.5 L828.1,523.0 L820.9,525.1 L813.7,526.9 L806.5,528.5 L799.4,529.8 L792.2,530.8 L785.1,531.5 L778.1,532.0 L771.1,532.1 L764.2,532.1 L757.4,531.7 L750.6,531.1 L744.0,530.3 L737.5,529.2 L731.1,527.9 L724.8,526.3 L718.7,524.5 L712.7,522.5 L706.9,520.3 L701.3,517.9 L695.8,515.3 L690.5,512.5 L685.3,509.5 L680.4,506.3 L675.7,503.0 L671.2,499.5 L666.8,495.9 L662.7,492.1 L658.9,488.2 L655.2,484.2 L651.8,480.0" stroke="#d4d04c" stroke-width="1.15"/>
<path d="M652.0,481.0 C650.7,477.9 646.4,470.7 644.0,462.4 C641.6,454.1 637.5,440.5 637.5,431.3 C637.5,422.1 642.9,411.1 644.0,407.0" stroke="#d4d04c" stroke-width="1.15"/>
<path d="M650.5,405.8 L851.0,411.0" stroke="#d4d04c" stroke-width="1.15"/>
<path d="M429.0,0.0 L649.7,358.0" stroke="#d4d04c" stroke-width="1.15"/>
<path d="M431.0,0.0 L514.5,149.0" stroke="#d4d04c" stroke-width="1.15"/>
<path d="M500.0,156.5 L514.5,149.0" stroke="#d4d04c" stroke-width="1.15"/>
<path d="M873.5,0.0 L739.6,217.5" stroke="#d4d04c" stroke-width="1.15"/>
<path d="M145.0,382.0 L415.4,389.0" stroke="#d4d04c" stroke-width="1.15"/>
<path d="M742.0,581.0 L765.5,627.0" stroke="#d4d04c" stroke-width="1.15"/>
<path d="M622.0,373.6 L631.0,382.0" stroke="#d4d04c" stroke-width="1.15"/>
<path d="M742.1,581.1 L748.5,577.5 L754.9,573.7 L761.0,569.6 L767.0,565.3 L772.9,560.9 L778.6,556.2 L784.1,551.3 L789.4,546.3 L794.5,541.0 L799.4,535.6 L804.2,530.0 L808.7,524.3 L813.0,518.4 L817.1,512.4 L820.9,506.2 L824.6,499.8 L828.0,493.4 L831.1,486.8 L834.0,480.1 L836.7,473.4 L839.1,466.5 L841.3,459.5 L843.2,452.5 L844.9,445.4 L846.3,438.2 L847.4,431.0 L848.3,423.8 L848.9,416.5 L849.3,409.2 L849.4,401.8 L849.2,394.5 L848.8,387.1 L848.1,379.8 L847.2,372.5 L845.9,365.2 L844.5,358.0 L842.7,350.8 L840.7,343.7 L838.5,336.6 L836.0,329.6 L833.3,322.7 L830.3,315.8 L827.1,309.1 L823.6,302.5 L819.9,296.0 L816.0,289.6 L811.8,283.3 L807.5,277.2 L802.9,271.2 L798.1,265.3 L793.1,259.7 L788.0,254.2 L782.6,248.8 L777.0,243.7 L771.3,238.7 L765.4,233.9 L759.4,229.3 L753.2,224.9 L746.8,220.8 L740.3,216.8 L733.7,213.1 L726.9,209.5 L720.1,206.2 L713.1,203.2 L706.0,200.3 L698.9,197.7 L691.6,195.4 L684.3,193.3 L676.9,191.4 L669.5,189.8 L662.0,188.4 L654.5,187.3 L647.0,186.5 L639.4,185.9 L631.8,185.5 L624.3,185.4 L616.7,185.6 L609.2,186.0 L601.7,186.7 L594.2,187.6 L586.8,188.8 L579.4,190.2 L572.1,191.9 L564.9,193.8 L557.7,196.0 L550.6,198.4 L543.7,201.0 L536.8,203.9 L530.1,207.0 L523.5,210.4 L517.0,214.0 L510.6,217.8 L504.4,221.8 L498.4,226.0 L492.5,230.5 L486.8,235.1 L481.3,239.9 L475.9,244.9 L470.7,250.1 L465.8,255.5 L461.0,261.1 L456.5,266.8 L452.1,272.7 L448.0,278.7 L444.1,284.8 L440.4,291.1 L437.0,297.6 L433.8,304.1 L430.8,310.8 L428.1,317.5 L425.6,324.4 L423.4,331.3 L421.4,338.4 L419.7,345.4 L418.3,352.6 L417.1,359.8 L416.1,367.1 L415.5,374.3 L415.0,381.7 L414.9,389.0" stroke="#ecea14" stroke-width="1.9"/>
<path d="M851.2,409.0 L849.5,403.5 L847.6,398.0 L845.6,392.6 L843.5,387.3 L841.2,382.1 L838.8,377.0 L836.2,372.0 L833.5,367.2 L830.8,362.4 L827.8,357.7 L824.8,353.2 L821.7,348.8 L818.5,344.5 L815.1,340.3 L811.7,336.2 L808.2,332.3 L804.6,328.5 L800.9,324.8 L797.2,321.3 L793.3,317.9 L789.4,314.7 L785.5,311.6 L781.4,308.6 L777.3,305.8 L773.2,303.1 L769.1,300.6 L764.8,298.2 L760.6,296.0 L756.3,293.9 L752.0,291.9 L747.7,290.2 L743.4,288.5 L739.1,287.0 L734.7,285.7 L730.4,284.5 L726.0,283.5 L721.7,282.6 L717.4,281.8 L713.1,281.2 L708.9,280.8 L704.7,280.5 L700.5,280.3 L696.3,280.3 L692.2,280.4 L688.2,280.7 L684.2,281.1 L680.3,281.6 L676.4,282.3 L672.6,283.1 L668.9,284.0 L665.2,285.0 L661.7,286.2 L658.2,287.5 L654.8,288.9 L651.5,290.5 L648.3,292.1 L645.3,293.9 L642.3,295.7 L639.4,297.7 L636.7,299.7 L634.1,301.8 L631.5,304.1 L629.2,306.4 L626.9,308.8 L624.8,311.2 L622.8,313.8 L621.0,316.4 L619.2,319.0 L617.7,321.8 L616.2,324.5 L615.0,327.3 L613.8,330.2 L612.8,333.1" stroke="#ecea14" stroke-width="1.9"/>
<path d="M613.0,333.6 C612.7,335.8 611.2,342.9 611.0,347.0 C610.8,351.1 610.2,353.6 612.0,358.0 C613.8,362.4 620.3,371.0 622.0,373.6" stroke="#ecea14" stroke-width="1.9"/>
<path d="M416.9,390.0 L419.2,395.5 L421.8,400.8 L424.5,406.0 L427.3,411.1 L430.2,416.0 L433.3,420.9 L436.5,425.5 L439.8,430.1 L443.3,434.5 L446.8,438.8 L450.4,442.9 L454.1,446.8 L457.9,450.7 L461.8,454.3 L465.8,457.8 L469.8,461.2 L473.9,464.4 L478.1,467.4 L482.3,470.3 L486.5,473.1 L490.8,475.6 L495.1,478.0 L499.4,480.3 L503.8,482.4 L508.1,484.3 L512.5,486.1 L516.9,487.7 L521.2,489.2 L525.6,490.5 L530.0,491.6 L534.3,492.6 L538.6,493.5 L542.9,494.2 L547.1,494.7 L551.3,495.2 L555.4,495.4 L559.5,495.6 L563.6,495.6 L567.6,495.5 L571.5,495.2 L575.4,494.8 L579.2,494.3 L582.9,493.7 L586.5,493.0 L590.0,492.1 L593.5,491.2 L596.9,490.1 L600.2,489.0 L603.4,487.7 L606.5,486.4 L609.4,485.0 L612.3,483.5 L615.1,481.9 L617.8,480.2 L620.4,478.5 L622.9,476.7 L625.2,474.9 L627.5,472.9 L629.6,471.0 L631.6,469.0 L633.6,466.9 L635.4,464.9 L637.1,462.8 L638.6,460.6 L640.1,458.4 L641.4,456.3 L642.7,454.1 L643.8,451.9 L644.8,449.6 L645.8,447.4 L646.6,445.2 L647.3,443.0 L647.9,440.8 L648.4,438.6 L648.8,436.5 L649.1,434.4 L649.3,432.2 L649.4,430.2 L649.4,428.1 L649.3,426.1 L649.1,424.1 L648.9,422.2 L648.6,420.3 L648.2,418.5 L647.7,416.7 L647.2,415.0 L646.6,413.3 L645.9,411.7 L645.2,410.1" stroke="#ecea14" stroke-width="1.9"/>
<path d="M512.0,557.5 L518.0,558.5 L523.9,559.3 L529.8,560.0 L535.6,560.6 L541.3,561.0 L546.9,561.2 L552.5,561.3 L558.0,561.2 L563.5,561.0 L568.8,560.7 L574.1,560.2 L579.3,559.6 L584.4,558.9 L589.4,558.0 L594.3,557.1 L599.1,556.0 L603.8,554.8 L608.5,553.5 L613.0,552.1 L617.4,550.6 L621.7,549.1 L625.9,547.4 L630.0,545.6 L634.0,543.8 L637.9,541.9 L641.7,539.9 L645.4,537.8 L649.0,535.7 L652.5,533.5 L655.8,531.2 L659.1,528.9 L662.2,526.5 L665.3,524.1 L668.2,521.7 L671.0,519.2 L673.7,516.6 L676.3,514.1 L678.8,511.4 L681.2,508.8 L683.5,506.1 L685.7,503.5 L687.8,500.8 L689.8,498.0 L691.6,495.3 L693.4,492.5 L695.1,489.8 L696.7,487.0 L698.2,484.2 L699.6,481.5 L700.9,478.7 L702.1,475.9 L703.2,473.2 L704.2,470.4 L705.2,467.7 L706.0,464.9 L706.8,462.2 L707.5,459.5 L708.1,456.8 L708.7,454.2 L709.1,451.5 L709.5,448.9 L709.8,446.3 L710.0,443.8 L710.2,441.2 L710.3,438.7 L710.3,436.2 L710.3,433.8 L710.2,431.3 L710.1,429.0 L709.8,426.6 L709.6,424.3 L709.2,422.0 L708.9,419.8 L708.4,417.5 L708.0,415.4 L707.4,413.2 L706.8,411.2 L706.2,409.1 L705.6,407.1 L704.8,405.1 L704.1,403.2 L703.3,401.3 L702.5,399.5 L701.6,397.7 L700.7,395.9 L699.8,394.2 L698.9,392.5 L697.9,390.9 L696.9,389.3 L695.8,387.8 L694.8,386.3 L693.7,384.8 L692.6,383.4 L691.5,382.0 L690.3,380.7 L689.2,379.4 L688.0,378.2 L686.8,377.0 L685.6,375.8 L684.4,374.7 L683.1,373.7 L681.9,372.6 L680.6,371.6 L679.4,370.7 L678.1,369.8 L676.8,368.9 L675.5,368.1 L674.3,367.3 L673.0,366.6 L671.7,365.9 L670.4,365.2 L669.1,364.6 L667.8,364.0 L666.5,363.4 L665.2,362.9 L663.9,362.4 L662.7,362.0 L661.4,361.5 L660.1,361.2 L658.9,360.8 L657.6,360.5 L656.3,360.3 L655.1,360.0 L653.9,359.8 L652.6,359.6" stroke="#ecea14" stroke-width="1.9"/>
<path d="M742.0,580.5 L745.8,576.2 L749.4,571.8 L752.8,567.4 L756.0,562.8 L759.0,558.1 L761.9,553.4 L764.5,548.6 L766.9,543.7 L769.1,538.7 L771.1,533.8 L773.0,528.7 L774.6,523.7 L776.0,518.6 L777.2,513.5 L778.2,508.5 L779.0,503.4 L779.7,498.3 L780.1,493.3 L780.3,488.2 L780.4,483.2 L780.3,478.3 L780.0,473.4 L779.5,468.6 L778.8,463.8 L778.0,459.1 L777.1,454.5 L775.9,449.9 L774.7,445.4 L773.3,441.1 L771.7,436.8 L770.0,432.6 L768.2,428.6 L766.3,424.6 L764.3,420.8 L762.1,417.0 L759.9,413.4 L757.6,409.9 L755.2,406.6 L752.7,403.3 L750.1,400.2 L747.5,397.2 L744.8,394.4 L742.1,391.6 L739.3,389.0 L736.5,386.6 L733.6,384.2 L730.8,382.0 L727.9,380.0 L725.0,378.0 L722.1,376.2 L719.2,374.5 L716.4,372.9 L713.5,371.4 L710.6,370.0 L707.8,368.8 L705.0,367.6 L702.3,366.6 L699.6,365.7 L696.9,364.8 L694.3,364.1 L691.7,363.4 L689.2,362.8 L686.7,362.3 L684.3,361.8 L682.0,361.5 L679.7,361.1 L677.5,360.9 L675.4,360.7 L673.3,360.5 L671.3,360.3 L669.4,360.2 L667.5,360.1 L665.8,360.1 L664.0,360.0 L662.4,360.0 L660.8,359.9 L659.3,359.8 L657.9,359.8 L656.5,359.7 L655.2,359.6 L653.9,359.4 L652.7,359.3 L651.5,359.1" stroke="#ecea14" stroke-width="1.9"/>
<path d="M615.0,387.0 L512.0,557.5" stroke="#ecea14" stroke-width="1.9"/>
<path d="M514.5,149.0 L542.0,197.0" stroke="#ecea14" stroke-width="1.9"/>
<path d="M415.4,389.0 L621.0,394.0" stroke="#eeee00" stroke-width="3"/>
<path d="M541.0,195.0 L644.0,371.0" stroke="#eeee00" stroke-width="3"/>
<path d="M739.6,217.5 L651.0,360.0" stroke="#eeee00" stroke-width="3"/>
<path d="M643.0,412.0 L742.0,581.0" stroke="#eeee00" stroke-width="3"/>
</g>
<polygon points="500.5,144.0 492.5,158.0 508.8,158.0" fill="none" stroke="#00ee55" stroke-width="1.6"/>
<polygon points="758.0,620.0 773.5,620.0 765.7,631.5" fill="none" stroke="#e81e5a" stroke-width="1.6"/>
<circle cx="765.5" cy="632.0" r="5.5" fill="none" stroke="#3a3ad8" stroke-width="1.5"/>
<path d="M765.5,632.0 L785.0,661.0" stroke="#2828d8" stroke-width="2"/>
<path d="M785.0,661.0 L788.0,669.0" stroke="#38c848" stroke-width="2"/>
<path d="M788.0,669.0 L792.0,679.0" stroke="#d8d070" stroke-width="2"/>
<defs><linearGradient id="th" x1="0" y1="0" x2="1" y2="0"><stop offset="0" stop-color="#4c4c94"/><stop offset="0.45" stop-color="#b4b4f2"/><stop offset="1" stop-color="#50509a"/></linearGradient>
<radialGradient id="tc" cx="0.4" cy="0.4" r="0.6"><stop offset="0" stop-color="#9a9a9a"/><stop offset="1" stop-color="#5a5a5a"/></radialGradient></defs>
<g transform="translate(792.0 679.0) rotate(-31)" stroke="#36367a" stroke-width="0.6"><path d="M-27,42 L27,42 L21,63 A21,6 0 0 1 -21,63 Z" fill="url(#th)"/><path d="M-31,34 L31,34 L31,41 A31,8 0 0 1 -31,41 Z" fill="url(#th)"/><ellipse cx="0" cy="34" rx="31" ry="8" fill="#7a7ac4"/><path d="M-29,37 A29,7.5 0 0 0 29,37" fill="none" stroke="#2a2a66" stroke-width="0.9"/><path d="M-21,25 L21,25 L21,33 A21,6 0 0 1 -21,33 Z" fill="url(#th)"/><path d="M-16.5,0 L16.5,0 L16.5,24 A16.5,5 0 0 1 -16.5,24 Z" fill="url(#th)"/><ellipse cx="0" cy="0" rx="16.5" ry="5" fill="#8c8cd4"/></g>
<polygon points="621.5,375.5 650.0,358.5 650.0,384.0 629.0,389.0" fill="#e4e4e8"/>
<ellipse cx="633.0" cy="394.5" rx="17.5" ry="20.5" fill="#8e8e8e" stroke="#1e1e1e" stroke-width="1.3"/>
<ellipse cx="634.0" cy="392.0" rx="14" ry="16" fill="none" stroke="#3a3a3a" stroke-width="1.2" stroke-dasharray="2,1.5"/>
<ellipse cx="632.0" cy="399.0" rx="10" ry="11" fill="#2e2e2e"/>
<ellipse cx="632.0" cy="399.0" rx="7" ry="7.5" fill="#7a7a7a"/>
<path d="M630.0,401.0 V385.0" stroke="#c2b648" stroke-width="3"/><polygon points="626.0,385.0 630.0,378.0 634.0,385.0" fill="#c2b648"/>
<path d="M630.0,401.0 H648.0" stroke="#30b838" stroke-width="3"/><polygon points="647.0,397.5 654.0,401.0 647.0,404.5" fill="#30b838"/>
<rect x="627.0" y="399.0" width="6" height="7" fill="#b81c1c"/>
</svg>
<!-- VP-SVG-END -->

<!-- bottom strip -->
<div class="a" style="left:619px;top:894px;width:1106px;height:4px;background:#e6e8ea;border-top:1px solid #d6d6d6;border-bottom:1px solid #d6d6d6"></div>
<svg class="a" style="left:626px;top:884px" width="16" height="17"><polygon points="2,7 7.5,2 13,7 13,17 2,17" fill="#0078d7"/></svg>
<div class="a" style="left:1512px;top:879px;font-family:'Liberation Mono',monospace;font-size:13px;line-height:17px;color:#4a4a4a;white-space:nowrap;transform:scaleY(1.15);transform-origin:0 50%">UG</div>
<div class="a" style="left:1528px;top:879px;font-family:'Liberation Sans',sans-serif;transform:skewX(-14deg);font-size:15px;line-height:17px;letter-spacing:1px;color:#4a4a4a;white-space:nowrap">爱好者论坛</div>
<div class="a" style="left:1615px;top:879px;font-family:'Liberation Mono',monospace;font-size:13px;letter-spacing:0.25px;line-height:17px;color:#4a4a4a;white-space:nowrap;transform:scaleY(1.15);transform-origin:0 50%">WWW.UGSNX.COM</div>
<!-- IME -->
<div class="a" style="left:1702px;top:727px;width:23px;height:26px;background:#fff"></div>
<div class="a" style="left:1713px;top:732px;font-size:14px;line-height:16px;color:#0a6fd6;font-weight:bold">中</div>
<svg class="a" style="left:1672px;top:718px" width="40" height="40" viewBox="0 0 40 40">
<defs><linearGradient id="so" x1="0" y1="0" x2="0" y2="1"><stop offset="0" stop-color="#f77a38"/><stop offset="1" stop-color="#ee4a10"/></linearGradient></defs>
<rect x="7" y="8" width="25" height="25" rx="4" transform="rotate(-17 19.5 20.5)" fill="url(#so)"/>
<path d="M28,13 C20,12 11,15 12,21 C13,24 20,23 24,24 C26,25 20,27 13,28 L14,31 C24,31 33,27 31,22 C30,19 22,20 19,19 C17,18 22,16 29,16 Z" fill="#fff"/>
</svg>

</body></html>
